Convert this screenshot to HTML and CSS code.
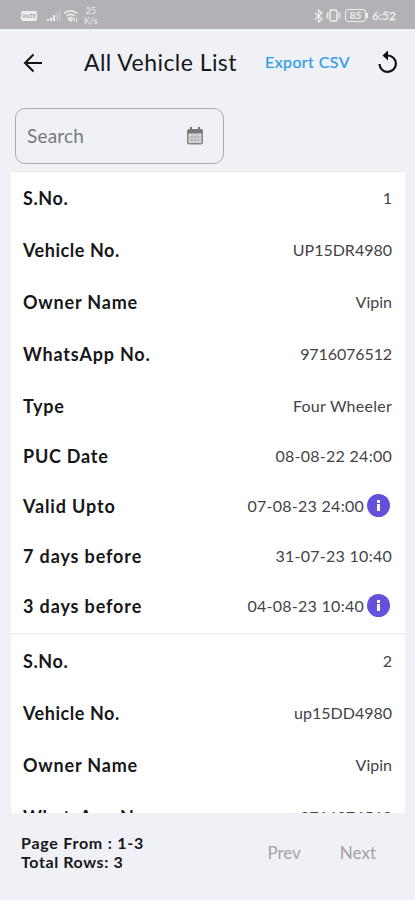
FILE: index.html
```html
<!DOCTYPE html>
<html lang="en">
<head>
<meta charset="utf-8">
<title>All Vehicle List</title>
<link rel="stylesheet" href="styles.css">
</head>
<body>
<div class="status">
  <span class="volte">VoLTE</span>
  <svg class="signal" width="14" height="12" viewBox="0 0 14 12"><path d="M1 11V9M4 11V7.500M7 11V5" stroke="#eee" stroke-width="2"/><path d="M10 11V3M13 11V1" stroke="#c3c1c6" stroke-width="2.500"/></svg>
  <svg class="wifi" width="16" height="14" viewBox="0 0 16 14" fill="none" stroke="#eee" stroke-width="1.600"><path d="M1 4.500Q7.500-1 14 4.500M3.500 7Q7.500 3.500 11.500 7M5.500 9.500Q7.500 7.500 9.500 9.500L7.500 12Z"/><path d="M11 9v4M13.500 13V9" stroke-width="1"/></svg>
  <span class="speed">25<br>K/s</span>
  <svg class="bt" width="9" height="14" viewBox="0 0 9 14" fill="none" stroke="#eee" stroke-width="1.300"><path d="M1 4l7 6-3.500 3V1L8 4l-7 6"/></svg>
  <svg class="vibrate" width="15" height="13" viewBox="0 0 15 13" fill="none" stroke="#eee" stroke-width="1.500"><rect x="4" y="1" width="7" height="11" rx="1.500"/><path d="M1.500 3.500v6M13.500 3.500v6"/></svg>
  <span class="battery">85</span>
  <span class="time">6:52</span>
</div>
<header class="bar">
  <svg class="back" width="20" height="20" viewBox="0 0 20 20" fill="none" stroke="#111" stroke-width="2"><path d="M19 10H2M10.500 1.500L2 10l8.500 8.500"/></svg>
  <h1 class="title">All Vehicle List</h1>
  <span class="export">Export CSV</span>
  <svg class="reload" width="20" height="24" viewBox="0 0 20 24"><path d="M9.500 5.500A8.200 8.200 0 1 1 1.500 14" fill="none" stroke="#111" stroke-width="2.200"/><path d="M10 .5v10L4.500 5.500Z" fill="#111"/></svg>
</header>
<div class="search">
  <span class="placeholder">Search</span>
  <svg width="16" height="18" viewBox="0 0 16 18"><path d="M4 0v4M12 0v4" stroke="#77777a" stroke-width="2"/><rect x=".75" y="2.750" width="14.500" height="14" rx="1.500" fill="#dcdce0" stroke="#858588" stroke-width="1.500"/><path d="M1 2.500h14v4H1z" fill="#77777a"/><path d="M5 7v9M8 7v9M11 7v9M2 10h12M2 13h12" stroke="#a4a4a8" stroke-width=".8"/></svg>
</div>
<main class="list">
  <section class="card">
    <div class="row"><b class="k-sno">S.No.</b><span>1</span></div>
    <div class="row"><b class="k-vehicle">Vehicle No.</b><span class="v-plate">UP15DR4980</span></div>
    <div class="row"><b class="k-owner">Owner Name</b><span class="v-owner">Vipin</span></div>
    <div class="row"><b class="k-phone">WhatsApp No.</b><span class="v-phone">9716076512</span></div>
    <div class="row type"><b class="k-type">Type</b><span class="v-type">Four Wheeler</span></div>
    <div class="row short"><b class="k-puc">PUC Date</b><span class="v-date">08-08-22 24:00</span></div>
    <div class="row short"><b class="k-valid">Valid Upto</b><span class="v-date">07-08-23 24:00</span><i class="info"></i></div>
    <div class="row short"><b class="k-days">7 days before</b><span class="v-date">31-07-23 10:40</span></div>
    <div class="row short"><b class="k-days">3 days before</b><span class="v-date">04-08-23 10:40</span><i class="info"></i></div>
  </section>
  <section class="card">
    <div class="row"><b class="k-sno">S.No.</b><span>2</span></div>
    <div class="row"><b class="k-vehicle">Vehicle No.</b><span class="v-plate">up15DD4980</span></div>
    <div class="row"><b class="k-owner">Owner Name</b><span class="v-owner">Vipin</span></div>
    <div class="row"><b class="k-phone">WhatsApp No.</b><span class="v-phone">9716076512</span></div>
  </section>
</main>
<footer class="footer">
  <div class="pages"><span class="from">Page From : 1-3</span><br><span class="total">Total Rows: 3</span></div>
  <span class="prev">Prev</span>
  <span class="next">Next</span>
</footer>
</body>
</html>
```
FILE: styles.css
```css
* { box-sizing: border-box; }
body {
  margin: 0;
  width: 415px;
  height: 900px;
  overflow: hidden;
  display: flex;
  flex-direction: column;
  background: #f0f1f6;
  color: #17171a;
  font-family: Lato, "Open Sans", sans-serif;
}
svg { display: block; flex: none; }
span, b, h1 { white-space: nowrap; }
.status {
  height: 29px;
  flex: none;
  display: flex;
  align-items: center;
  padding: 2px 21px 0;
  background: #b3b1b6;
  color: #eee;
}
.volte {
  width: 16px;
  height: 10px;
  border-radius: 2px;
  background: #eee;
  color: #a09ea3;
  font: bold 5px/10px Lato, sans-serif;
  text-align: center;
}
.signal { margin-left: 10px; }
.wifi { margin-left: 2px; }
.speed { margin-left: 5px; font-size: 9px; line-height: 10px; text-align: center; }
.bt { margin-left: auto; }
.vibrate { margin-left: 3px; }
.battery {
  position: relative;
  width: 21px;
  height: 13px;
  margin-left: 4px;
  border: 1.5px solid #eee;
  border-radius: 3px;
  font-size: 10px;
  font-weight: 700;
  line-height: 11px;
  text-align: center;
}
.battery::after {
  content: "";
  position: absolute;
  right: -3px;
  top: 3px;
  width: 2px;
  height: 5px;
  background: #eee;
}
.time { width: 22px; margin-left: 6px; font-size: 12px; -webkit-text-stroke: .3px #eee; }
.bar {
  height: 67px;
  flex: none;
  display: flex;
  align-items: center;
  padding: 0 17px 0 23px;
}
.title { margin: 0 0 1px 41px; width: 153px; font-size: 23px; font-weight: 400; letter-spacing: .45px; }
.export {
  margin: 0 0 2px 28px;
  width: 87px;
  font-size: 16px;
  letter-spacing: .4px;
  color: #2c9be6;
  -webkit-text-stroke: .2px #2c9be6;
}
.reload { margin-left: auto; margin-bottom: 2px; }
.search {
  width: 209px;
  height: 56px;
  flex: none;
  display: flex;
  align-items: center;
  justify-content: space-between;
  margin: 12px 0 0 15px;
  padding: 0 20px 0 11px;
  border: 1.5px solid #acadb2;
  border-radius: 10px;
}
.placeholder { margin-bottom: 2px; font-size: 19px; letter-spacing: .2px; color: #77787d; }
.list {
  width: 394px;
  height: 642px;
  flex: none;
  margin: 7px 0 0 11px;
  overflow: hidden;
  background: #fff;
  border-top: 1px solid #e9eaee;
}
.card { border-bottom: 2px solid #f2f2f5; padding-bottom: 2px; }
.row {
  height: 52px;
  display: flex;
  align-items: center;
  padding: 0 13px 0 12px;
  font-size: 16px;
}
.row.type { height: 51px; }
.row.short { height: 50px; }
.row b { font-size: 18px; margin-right: auto; }
.row span { margin-bottom: 1px; color: #434347; }
.row .k-sno { letter-spacing: .6px; }
.row .k-vehicle { letter-spacing: .55px; }
.row .k-owner, .row .k-phone { letter-spacing: .8px; }
.row .k-type, .row .k-puc { letter-spacing: .75px; }
.row .k-valid, .row .k-days { letter-spacing: .87px; }
.v-date { letter-spacing: .27px; }
.v-type { letter-spacing: .25px; }
.v-phone { letter-spacing: -.1px; }
.info {
  position: relative;
  width: 23px;
  height: 23px;
  margin: 0 2px 1px 3px;
  border-radius: 50%;
  background: #6351dc;
}
.info::before, .info::after {
  content: "";
  position: absolute;
  left: 10px;
  width: 3px;
  background: #fff;
}
.info::before { top: 6px; height: 3px; }
.info::after { top: 10px; height: 7px; }
.footer {
  flex: 1;
  display: flex;
  align-items: flex-start;
  padding: 21px 39px 0 21px;
}
.pages { font-size: 16px; font-weight: 700; line-height: 18.5px; margin-right: auto; }
.from { letter-spacing: .75px; }
.total { letter-spacing: .6px; }
.prev, .next { margin-top: 8px; font-size: 17px; color: #a2a2a7; }
.next { margin-left: 39px; }
```
